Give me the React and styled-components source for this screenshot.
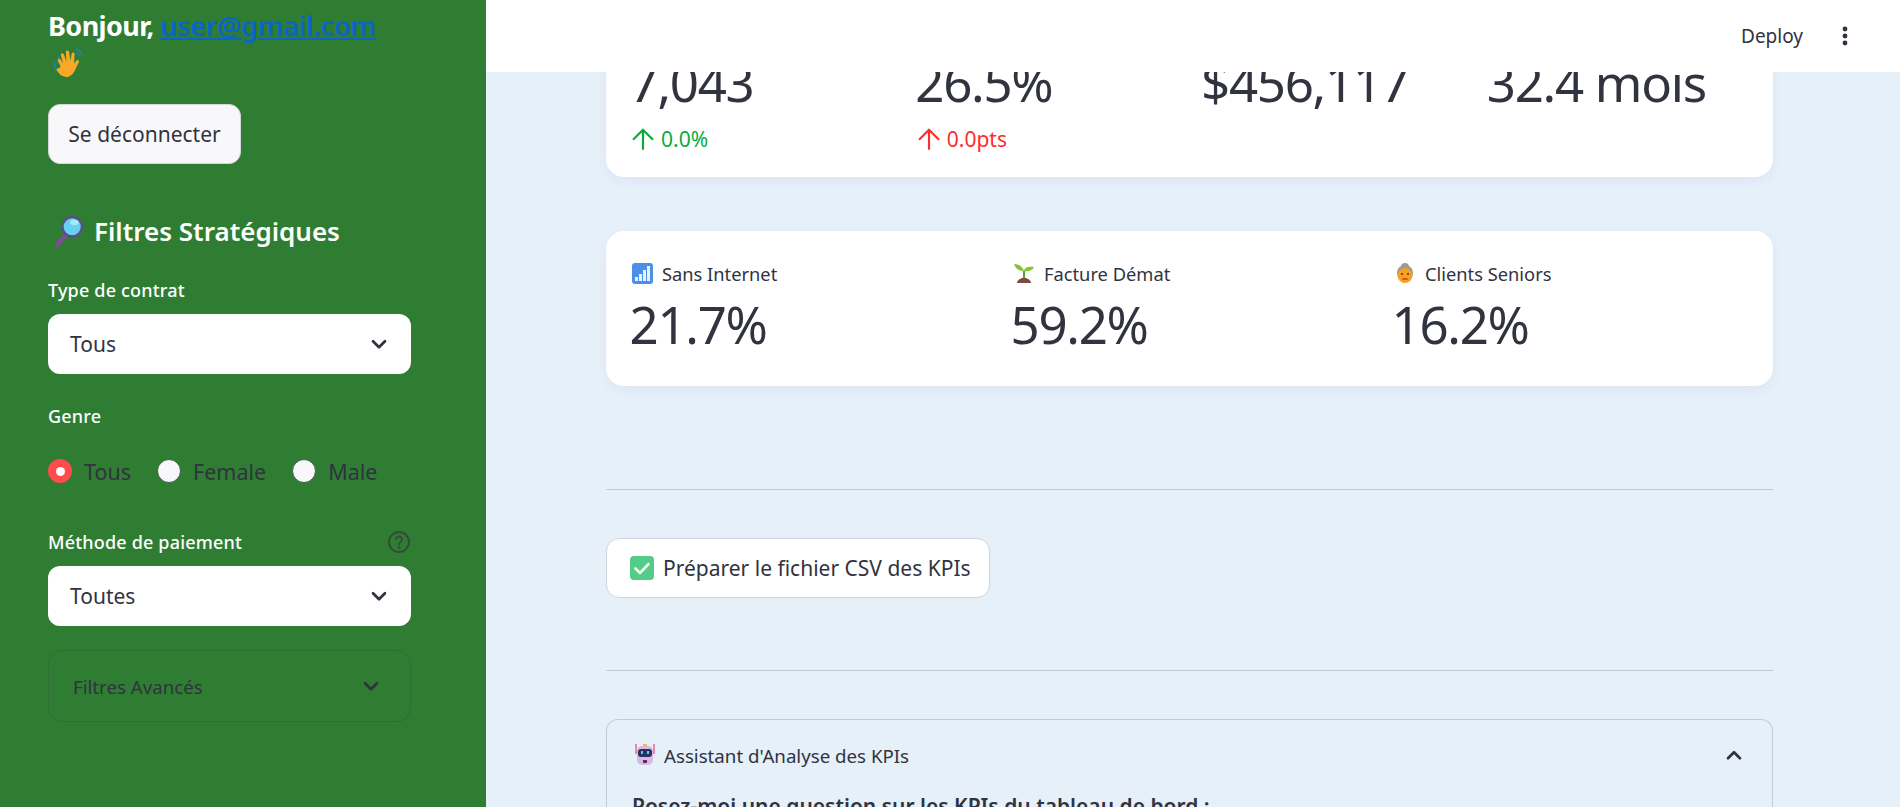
import React from "react";
import styled, { createGlobalStyle } from "styled-components";

const Global = createGlobalStyle`
  html, body { margin: 0; padding: 0; height: 100%; overflow: hidden; }
  body { font-family: "Noto Sans", "Open Sans", sans-serif; color: #31333f; }
  #root { height: 100%; }
  * { box-sizing: border-box; }
`;

const Shell = styled.div`display: flex; height: 807px; width: 1900px; overflow: hidden;`;
const Sidebar = styled.aside`width: 486px; flex: none; background: #2e7d32; padding: 6px 75px 0 48px; overflow: hidden;`;
const Greeting = styled.div`font-size: 27px; font-weight: 700; line-height: 40px; height: 78px; color: #fff; letter-spacing: -0.022em;`;
const MailLink = styled.a`color: #0b65c9; text-decoration: underline; font-weight: 600; letter-spacing: -0.01em;`;
const EmojiLine = styled.div`display: block; height: 36px; padding: 1px 0 0 5px; svg { display: block; }`;
const LogoutButton = styled.button`
  display: block; margin-top: 20px; width: 193px; height: 60px; border-radius: 12px; border: 1px solid #d5d6da;
  background: #f8f8fb; color: #31333f; font: inherit; font-size: 21px; padding: 0;
`;
const SideTitle = styled.h2`
  display: flex; align-items: center; gap: 9px; margin: 47px 0 0; padding-left: 5px; height: 40px;
  font-size: 26px; font-weight: 600; color: #fff;
`;
const FieldLabel = styled.div`
  display: flex; justify-content: space-between; align-items: center; height: 24px;
  margin-top: ${p => p.$top}px; font-size: 18px; font-weight: 500; color: #fff; letter-spacing: 0.01em;
`;
const SelectBox = styled.div`
  display: flex; justify-content: space-between; align-items: center; height: 60px; margin-top: 12px;
  padding: 0 21px 0 22px; background: #fff; border-radius: 12px; font-size: 21px; color: #31333f;
`;
const RadioRow = styled.div`display: flex; align-items: center; height: 24px; margin-top: 31px; font-size: 21.5px; color: #31333f;`;
const RadioItem = styled.div`display: flex; align-items: center; gap: 12px; margin-right: 26px;`;
const RadioDot = styled.span`
  width: 24px; height: 24px; border-radius: 50%; display: flex; align-items: center; justify-content: center;
  background: ${p => (p.$on ? "#ff4b4b" : "#f8f8fb")};
  border: ${p => (p.$on ? "none" : "1.5px solid #3e5a45")};
  &::after { content: ""; display: ${p => (p.$on ? "block" : "none")}; width: 9px; height: 9px; border-radius: 50%; background: #f8f8fb; }
`;
const SideExpander = styled.div`
  display: flex; justify-content: space-between; align-items: center; height: 72px; margin-top: 24px;
  padding: 0 28px 0 24px; border: 1px solid rgba(49, 51, 63, 0.2); border-radius: 14px; font-size: 18.7px; color: #31333f;
`;

const Main = styled.main`flex: 1; min-width: 0; display: flex; flex-direction: column; background: #e6f0f9;`;
const TopBar = styled.header`
  height: 72px; flex: none; background: #fff; display: flex; align-items: center; justify-content: flex-end;
  padding-right: 49px; gap: 36px; font-size: 19px; position: relative; z-index: 1;
`;
const Scroller = styled.div`flex: 1; overflow: hidden; padding: 0 127px 0 120px;`;
const Card = styled.section`
  display: grid; grid-template-columns: repeat(${p => p.$cols}, 1fr); gap: 24px; padding: 28px 24px 24px;
  background: #fff; border-radius: 18px; box-shadow: 0 4px 12px rgba(40, 80, 130, 0.06);
`;
const TopCard = styled(Card)`margin-top: -68px; height: 173px; padding-top: 0;`;
const LowerCard = styled(Card)`margin-top: 54px; height: 155px;`;
const Metric = styled.div`display: flex; flex-direction: column; min-width: 0;`;
const MetricLabel = styled.div`display: flex; align-items: center; gap: 9px; height: 28px; font-size: 18.3px; padding-left: 2px;`;
const MetricValue = styled.div`font-size: 51px; line-height: 66px; margin: 4px 0 0 -0.5px; white-space: nowrap; letter-spacing: -0.025em;`;
const ClippedValue = styled(MetricValue)`margin-top: 45px;`;
const Delta = styled.div`
  display: flex; align-items: center; gap: 5px; height: 28px; margin-top: 10px; font-size: 21px; padding-left: 0;
  color: ${p => p.$color};
`;
const Rule = styled.hr`border: none; height: 1px; background: #c4ccd4; margin: ${p => p.$m};`;
const CsvButton = styled.button`
  display: flex; align-items: center; gap: 9px; width: 384px; height: 60px; padding: 0 0 0 23px;
  background: #fff; border: 1px solid #d2d5da; border-radius: 13px; font: inherit; font-size: 21px; color: #31333f;
`;
const Expander = styled.section`margin-top: 48px; border: 1px solid #c3ccd6; border-radius: 12px 12px 0 0; border-bottom: none; height: 140px; padding: 0 25px;`;
const ExpanderHead = styled.div`display: flex; justify-content: space-between; align-items: center; height: 70px; font-size: 18.7px; padding-right: 2px;`;
const ExpanderTitle = styled.div`display: flex; align-items: center; gap: 7px; padding-left: 1px;`;
const Question = styled.div`font-size: 21px; font-weight: 600; line-height: 28px; margin-top: 2px; white-space: nowrap;`;

const Chevron = ({ up, size = 22, color = "#31333f" }) => (
  <svg width={size} height={size} viewBox="0 0 24 24" fill="none" stroke={color} strokeWidth="3" strokeLinecap="round" strokeLinejoin="round">
    <path d={up ? "M5.5 15.5 12 9l6.5 6.5" : "M5.5 9 12 15.5 18.5 9"} />
  </svg>
);
const UpArrow = ({ color }) => (
  <svg width="26" height="26" viewBox="0 0 24 24" fill="none" stroke={color} strokeWidth="2" strokeLinecap="square">
    <path d="M12 21V4M3.5 12 12 3.5 20.5 12" />
  </svg>
);
const Help = () => (
  <svg width="24" height="24" viewBox="0 0 24 24" fill="none" stroke="#354a3a" strokeWidth="1.9" strokeLinecap="round">
    <circle cx="12" cy="12" r="10" />
    <path d="M9 9.4a3 3 0 1 1 4.6 2.6c-1 .6-1.6 1.2-1.6 2.3" />
    <circle cx="12" cy="17.4" r=".5" />
  </svg>
);
const Kebab = () => (
  <svg width="12" height="24" viewBox="0 0 12 24" fill="#31333f">
    <circle cx="6" cy="5" r="2.4" /><circle cx="6" cy="12" r="2.4" /><circle cx="6" cy="19" r="2.4" />
  </svg>
);
const Wave = () => (
  <svg width="31" height="31" viewBox="3 1 26 28">
    <path d="M3 14c0 4 1.500 7 3 9M7 10c-1 2-1 4-.5 6M23 3c2 .5 4 2 5 5M23 6c1.500.5 2.500 1.500 3 3" fill="none" stroke="#2a83b0" strokeWidth="1.200" strokeLinecap="round" />
    <path d="M9 19 6.500 13.500c-.8-1.700 1.500-2.800 2.400-1.200l2.200 3.500-2-7.300c-.5-1.800 2-2.600 2.700-.8l2.400 6.500-.6-8.400c-.1-2 2.600-2.200 2.900-.2l1.300 8 1-6.300c.3-1.900 2.800-1.500 2.700.4l-.5 8.500 2-2.800c1.100-1.500 3.100-.1 2.200 1.500l-3.400 7c-2.100 4.500-6 7.300-10.400 5.600-3.500-1.300-4.600-3.500-6.400-6.500z" fill="#f9a825" />
  </svg>
);
const Magnifier = () => (
  <svg width="32" height="32" viewBox="3 1 28 30">
    <path d="M13 18 4 27a2.600 2.600 0 0 0 3.800 3.400L16 21z" fill="#7a4f8f" />
    <circle cx="20" cy="12" r="10" fill="#5d4a8f" />
    <circle cx="20" cy="12" r="8" fill="#67d0ee" />
    <ellipse cx="22" cy="8" rx="4" ry="2.500" fill="#a6e8f7" />
  </svg>
);
const Signal = () => (
  <svg width="21" height="21" viewBox="0 0 21 21">
    <rect width="21" height="21" rx="3" fill="#4a90e8" />
    <g fill="#e8f1fc"><rect x="3" y="14" width="3" height="4" /><rect x="7" y="11" width="3" height="7" /><rect x="11" y="7" width="3" height="11" /><rect x="15" y="3" width="3" height="15" /></g>
  </svg>
);
const Seedling = () => (
  <svg width="22" height="22" viewBox="0 0 22 22">
    <path d="M4 21c.5-3.500 3.500-5 7-5s6.500 1.500 7 5z" fill="#7b4b3e" />
    <path d="M10 16V9h2v7z" fill="#5aa02c" />
    <path d="M11 9C10 5 6 2 1 2c1 4 5 7 10 7zM11 9c.5-3 3.500-5 10-4-1 3-5 5-10 4z" fill="#86c232" />
  </svg>
);
const Senior = () => (
  <svg width="22" height="22" viewBox="0 0 22 22">
    <circle cx="11" cy="5" r="4" fill="#9a9a9a" />
    <circle cx="11" cy="11" r="8" fill="#9a9a9a" />
    <circle cx="11" cy="13.500" r="7.500" fill="#f8a01f" />
    <circle cx="8" cy="12" r="1" fill="#4a3a2c" /><circle cx="14" cy="12" r="1" fill="#4a3a2c" />
    <path d="M8.500 17h5" stroke="#c2402c" strokeWidth="1.500" />
  </svg>
);
const Check = () => (
  <svg width="24" height="24" viewBox="0 0 24 24">
    <rect width="24" height="24" rx="4" fill="#52cc86" />
    <path d="M5.500 12.500 10 17l8.500-9" fill="none" stroke="#eefaf3" strokeWidth="2.600" strokeLinecap="round" strokeLinejoin="round" />
  </svg>
);
const Robot = () => (
  <svg width="24" height="24" viewBox="0 0 24 24">
    <path d="M3 1v10M21 1v10" stroke="#e91e63" strokeWidth="1" />
    <rect x="10" y="1" width="4" height="3" fill="#f5b942" />
    <rect x="4" y="3" width="16" height="19" rx="5" fill="#dcb7e6" />
    <rect x="5" y="6" width="14" height="8" rx="3" fill="#25345a" />
    <rect x="8" y="8" width="2" height="3" fill="#5ec8f0" /><rect x="14" y="8" width="2" height="3" fill="#5ec8f0" />
    <rect x="10" y="17" width="4" height="3" fill="#4d3560" />
  </svg>
);

const topMetrics = [
  { value: "7,043", delta: "0.0%", color: "#09ab3b" },
  { value: "26.5%", delta: "0.0pts", color: "#ff2b2b" },
  { value: "$456,117" },
  { value: "32.4 mois" },
];
const lowerMetrics = [
  { icon: <Signal />, label: "Sans Internet", value: "21.7%" },
  { icon: <Seedling />, label: "Facture Démat", value: "59.2%" },
  { icon: <Senior />, label: "Clients Seniors", value: "16.2%" },
];

export default function App() {
  return (
    <Shell>
      <Global />
      <Sidebar>
        <Greeting>
          Bonjour, <MailLink href="#">user@gmail.com</MailLink>
          <EmojiLine><Wave /></EmojiLine>
        </Greeting>
        <LogoutButton>Se déconnecter</LogoutButton>
        <SideTitle><Magnifier />Filtres Stratégiques</SideTitle>
        <FieldLabel $top={27}>Type de contrat</FieldLabel>
        <SelectBox>Tous<Chevron /></SelectBox>
        <FieldLabel $top={30}>Genre</FieldLabel>
        <RadioRow>
          <RadioItem><RadioDot $on />Tous</RadioItem>
          <RadioItem><RadioDot />Female</RadioItem>
          <RadioItem><RadioDot />Male</RadioItem>
        </RadioRow>
        <FieldLabel $top={47}>Méthode de paiement<Help /></FieldLabel>
        <SelectBox>Toutes<Chevron /></SelectBox>
        <SideExpander>Filtres Avancés<Chevron /></SideExpander>
      </Sidebar>
      <Main>
        <TopBar>Deploy<Kebab /></TopBar>
        <Scroller>
          <TopCard $cols={4}>
            {topMetrics.map(m => (
              <Metric key={m.value}>
                <ClippedValue>{m.value}</ClippedValue>
                {m.delta && <Delta $color={m.color}><UpArrow color={m.color} />{m.delta}</Delta>}
              </Metric>
            ))}
          </TopCard>
          <LowerCard $cols={3}>
            {lowerMetrics.map(m => (
              <Metric key={m.label}>
                <MetricLabel>{m.icon}{m.label}</MetricLabel>
                <MetricValue>{m.value}</MetricValue>
              </Metric>
            ))}
          </LowerCard>
          <Rule $m="103px 0 48px" />
          <CsvButton><Check />Préparer le fichier CSV des KPIs</CsvButton>
          <Rule $m="72px 0 0" />
          <Expander>
            <ExpanderHead>
              <ExpanderTitle><Robot />Assistant d'Analyse des KPIs</ExpanderTitle>
              <Chevron up />
            </ExpanderHead>
            <Question>Posez-moi une question sur les KPIs du tableau de bord :</Question>
          </Expander>
        </Scroller>
      </Main>
    </Shell>
  );
}
